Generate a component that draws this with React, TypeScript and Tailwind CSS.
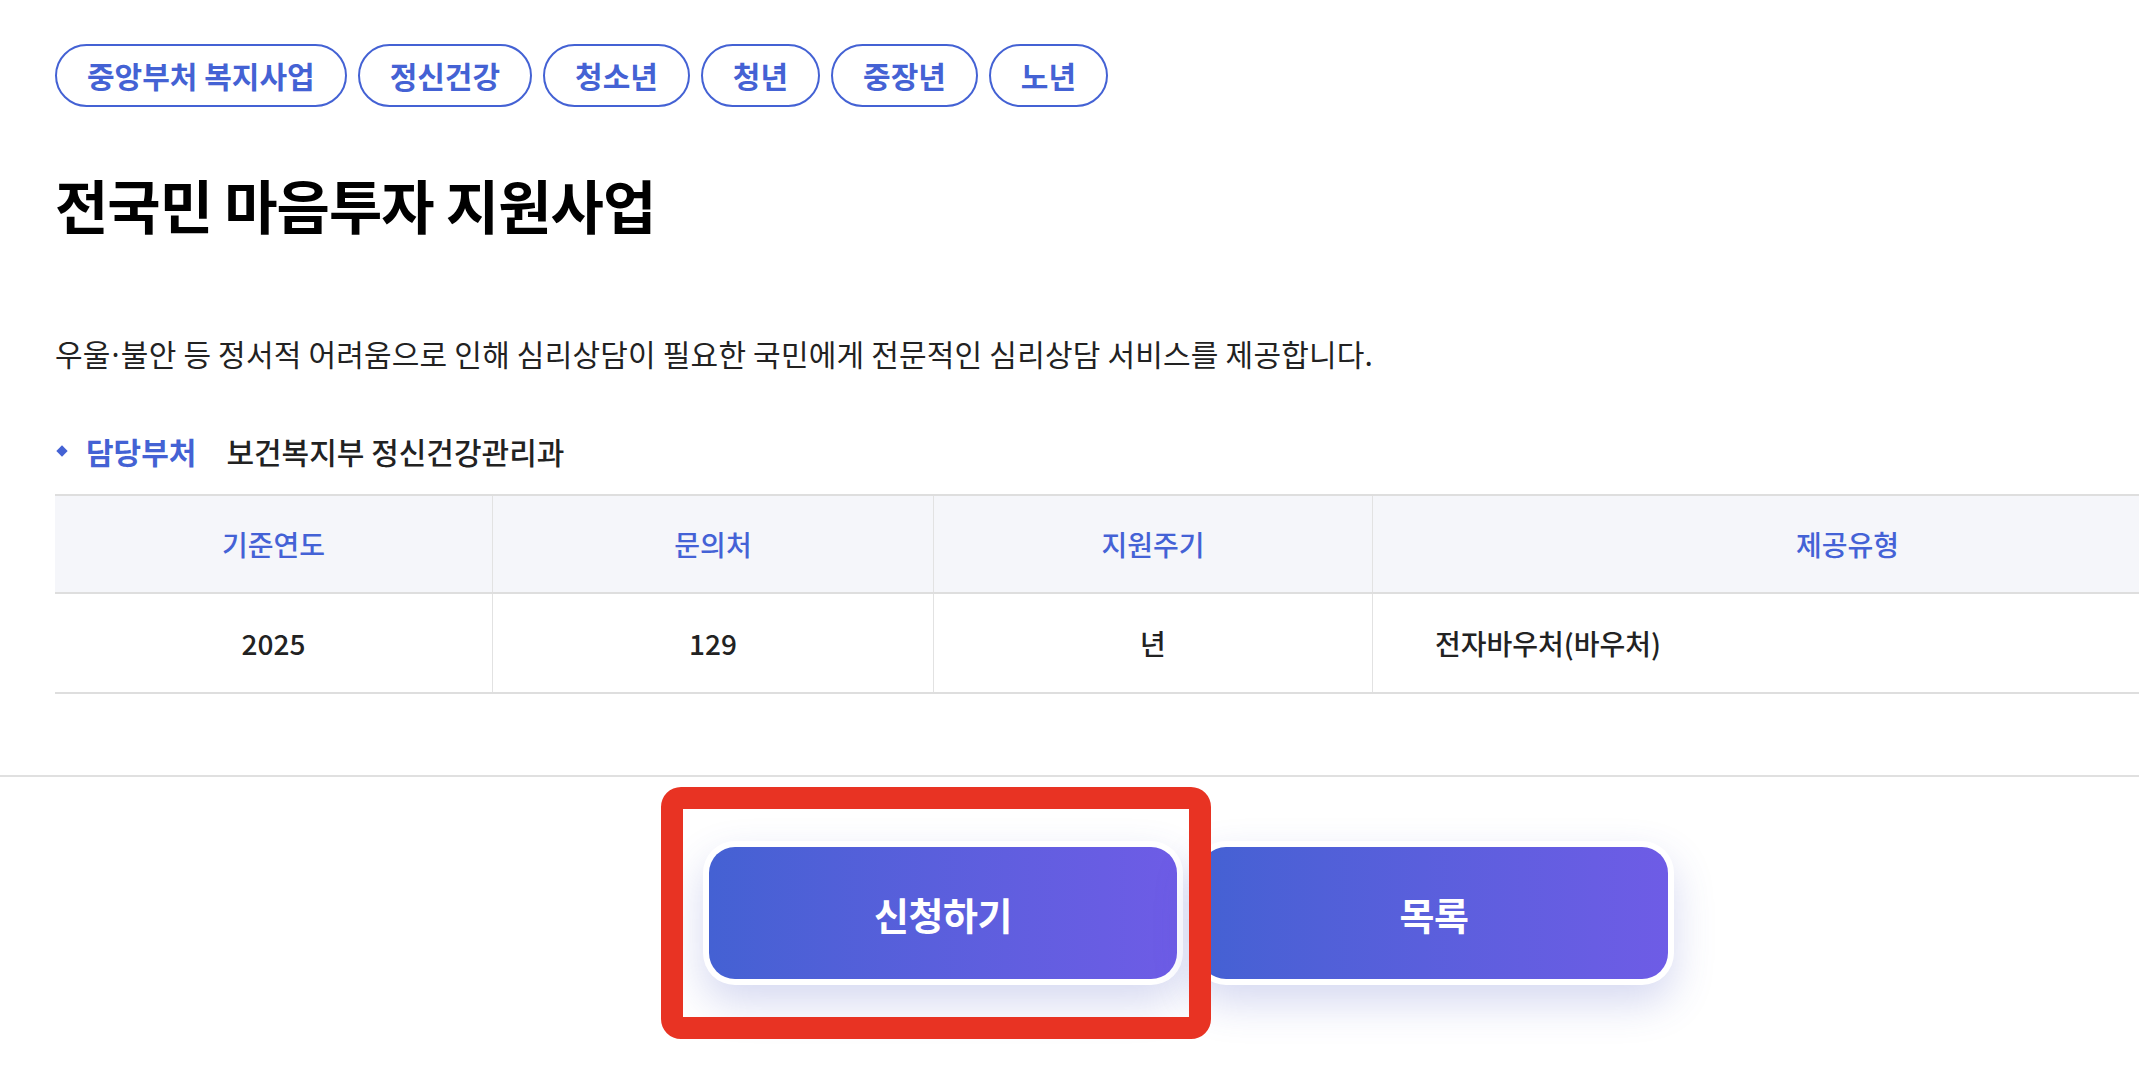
import React from 'react';

const tags = ['중앙부처 복지사업', '정신건강', '청소년', '청년', '중장년', '노년'];

const columns = [
  { head: '기준연도', value: '2025', align: 'center' },
  { head: '문의처', value: '129', align: 'center' },
  { head: '지원주기', value: '년', align: 'center' },
  { head: '제공유형', value: '전자바우처(바우처)', align: 'left' },
];

function ActionButton({ label }: { label: string }) {
  return (
    <div className="w-[480px] p-[6px] bg-white rounded-[32px] shadow-[0_18px_40px_rgba(70,82,190,0.22)]">
      <button className="w-full h-[132px] rounded-[26px] bg-gradient-to-r from-[#4461d3] to-[#6e5ce6] text-white text-[38px] font-bold tracking-[-0.5px]">
        {label}
      </button>
    </div>
  );
}

export default function App() {
  return (
    <div className="relative w-[2139px] h-[1071px] overflow-hidden bg-white font-['Noto_Sans_CJK_KR','Noto_Sans',sans-serif] text-[#222]">
      <div className="ml-[55px] w-[2267px] pt-[44px]">
        {/* tags */}
        <div className="flex gap-[11px]">
          {tags.map((tag) => (
            <span
              key={tag}
              className="h-[63px] px-[30px] flex items-center rounded-full border-2 border-[#4462d4] text-[#4462d4] text-[30px] font-semibold"
            >
              {tag}
            </span>
          ))}
        </div>

        <h1 className="mt-[60px] text-[58px] leading-[75px] font-bold tracking-[-1px] text-black">
          전국민 마음투자 지원사업
        </h1>

        <p className="mt-[91px] text-[30px] leading-[40px] tracking-[0.2px] text-[#222]">
          우울<span className="font-['Noto_Sans'] mx-[1px]">·</span>불안 등 정서적 어려움으로 인해 심리상담이 필요한 국민에게 전문적인 심리상담 서비스를 제공합니다.
        </p>

        <div className="mt-[56px] flex items-center h-[40px]">
          <span className="ml-[3px] w-[8px] h-[8px] rotate-45 bg-[#4462d4]" />
          <span className="ml-[20px] text-[30px] font-bold text-[#4462d4]">담당부처</span>
          <span className="ml-[30px] text-[30px] font-medium text-[#222]">보건복지부 정신건강관리과</span>
        </div>

        {/* info table */}
        <div className="mt-[23px] border-t-2 border-b-2 border-[#dedede]">
          <div className="grid grid-cols-[437px_441px_439px_1fr] bg-[#f5f6fa] border-b-2 border-[#dedede]">
            {columns.map((col, i) => (
              <div
                key={col.head}
                className={`h-[96px] flex items-center justify-center text-[28px] font-medium text-[#4462d6] ${
                  i > 0 ? 'border-l border-[#e2e2e2]' : ''
                }`}
              >
                {col.head}
              </div>
            ))}
          </div>
          <div className="grid grid-cols-[437px_441px_439px_1fr]">
            {columns.map((col, i) => (
              <div
                key={col.head}
                className={`h-[98px] flex items-center text-[28px] font-medium text-[#222] ${
                  col.align === 'center' ? 'justify-center' : 'justify-start pl-[62px]'
                } ${i > 0 ? 'border-l border-[#e2e2e2]' : ''}`}
              >
                {col.value}
              </div>
            ))}
          </div>
        </div>
      </div>

      <div className="mt-[81px] h-[2px] bg-[#e0e0e0]" />

      <div className="ml-[55px] w-[2267px] mt-[64px] flex justify-center gap-[11px]">
        <ActionButton label="신청하기" />
        <ActionButton label="목록" />
      </div>

      {/* highlight annotation */}
      <div className="absolute left-[661px] top-[787px] w-[550px] h-[252px] border-[22px] border-[#e83323] rounded-[20px]" />
    </div>
  );
}
